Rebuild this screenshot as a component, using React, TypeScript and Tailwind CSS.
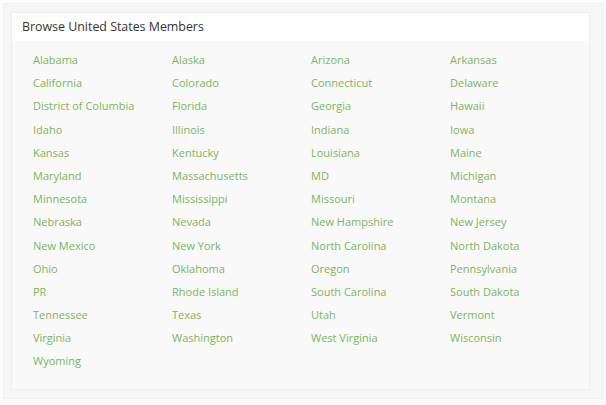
import React from 'react';

const states = [
  'Alabama', 'Alaska', 'Arizona', 'Arkansas',
  'California', 'Colorado', 'Connecticut', 'Delaware',
  'District of Columbia', 'Florida', 'Georgia', 'Hawaii',
  'Idaho', 'Illinois', 'Indiana', 'Iowa',
  'Kansas', 'Kentucky', 'Louisiana', 'Maine',
  'Maryland', 'Massachusetts', 'MD', 'Michigan',
  'Minnesota', 'Mississippi', 'Missouri', 'Montana',
  'Nebraska', 'Nevada', 'New Hampshire', 'New Jersey',
  'New Mexico', 'New York', 'North Carolina', 'North Dakota',
  'Ohio', 'Oklahoma', 'Oregon', 'Pennsylvania',
  'PR', 'Rhode Island', 'South Carolina', 'South Dakota',
  'Tennessee', 'Texas', 'Utah', 'Vermont',
  'Virginia', 'Washington', 'West Virginia', 'Wisconsin',
  'Wyoming',
];

const App: React.FC = () => {
  return (
    <div className="min-h-screen w-[606px] h-[405px] bg-[#fbfbfb] p-[3px] font-['Open_Sans','Liberation_Sans',sans-serif]">
      <div className="h-[396px] bg-[#f6f6f6] pl-[7px] pt-[8px] border border-[#f0f0f0]">
        <div className="w-[579px] h-[378px] bg-[#f9f9f9] border border-[#eeeeee] flex flex-col">
          {/* Header */}
          <div className="h-[28px] bg-white flex items-center px-[10px]">
            <h2 className="text-[12.4px] text-[#333333] leading-none pt-[1px]">Browse United States Members</h2>
          </div>

          {/* States grid */}
          <div className="grid grid-cols-[139px_139px_139px_139px] pl-[21px] pt-[11px]">
            {states.map((s) => (
              <a key={s} href="#" className="h-[23.2px] text-[11px] leading-[15px] text-[#7bb65a]">
                {s}
              </a>
            ))}
          </div>
        </div>
      </div>
    </div>
  );
};

export default App;
